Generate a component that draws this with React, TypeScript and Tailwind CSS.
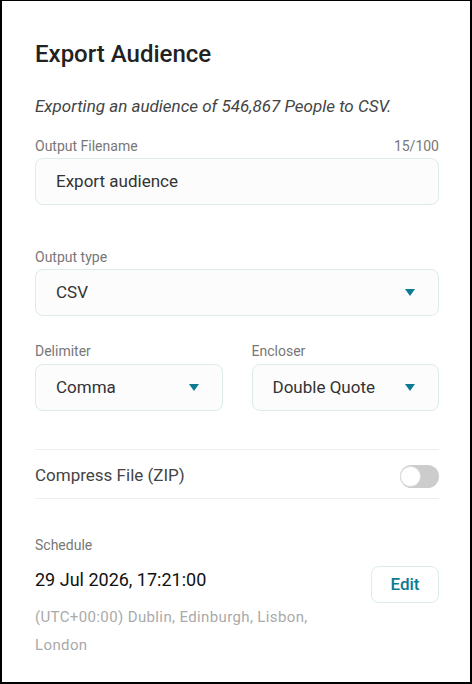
import { useState } from "react";

function Caret() {
  return (
    <svg width="10" height="8" viewBox="0 0 10 8" className="shrink-0">
      <path d="M0 0 H10 L5 7 Z" fill="#0b7b94" />
    </svg>
  );
}

function SelectBox({ value, className = "" }: { value: string; className?: string }) {
  return (
    <div
      className={`flex h-[47px] items-center justify-between rounded-lg border border-[#dcecec] bg-[#fcfcfc] pl-5 pr-[23px] ${className}`}
    >
      <span className="text-[17px] text-[#333]">{value}</span>
      <Caret />
    </div>
  );
}

export default function App() {
  const [zip, setZip] = useState(false);

  return (
    <div
      className="flex h-[684px] w-[472px] flex-col border-t border-r-2 border-b-2 border-l-2 border-black bg-white pt-[39px] pl-[33px] pr-[31px] text-[#333]"
      style={{ fontFamily: "Roboto, 'Noto Sans', sans-serif" }}
    >
      {/* Header */}
      <h1 className="text-[24px] font-medium leading-7 text-[#222]">Export Audience</h1>
      <p className="mt-[26px] text-[17px] italic leading-6 text-[#444]">
        Exporting an audience of 546,867 People to CSV.
      </p>

      {/* Filename */}
      <div className="mt-[19px] flex justify-between text-[14px] leading-[18px] text-[#777]">
        <span>Output Filename</span>
        <span>15/100</span>
      </div>
      <div className="mt-[3px] flex h-[47px] items-center rounded-lg border border-[#dcecec] bg-[#fcfcfc] px-5">
        <span className="text-[17px] text-[#333]">Export audience</span>
      </div>

      {/* Output type */}
      <div className="mt-[43px] text-[14px] leading-[18px] text-[#777]">Output type</div>
      <SelectBox value="CSV" className="mt-[3px]" />

      {/* Delimiter / Encloser */}
      <div className="mt-[26px] grid grid-cols-2 gap-[29px]">
        <div>
          <div className="text-[14px] leading-[18px] text-[#777]">Delimiter</div>
          <SelectBox value="Comma" className="mt-1" />
        </div>
        <div>
          <div className="text-[14px] leading-[18px] text-[#777]">Encloser</div>
          <SelectBox value="Double Quote" className="mt-1" />
        </div>
      </div>

      {/* Compress toggle */}
      <div className="mt-[38px] flex h-[50px] items-center justify-between border-y border-[#eeeeee] pt-[4px]">
        <span className="text-[17px] text-[#444]">Compress File (ZIP)</span>
        <button
          onClick={() => setZip(!zip)}
          className={`relative h-[23px] w-[39px] rounded-full ${zip ? "bg-[#0b7b94]" : "bg-[#cccccc]"}`}
        >
          <span
            className={`absolute top-[1px] h-[21px] w-[21px] rounded-full border border-[#dddddd] bg-white ${zip ? "left-[17px]" : "left-0"}`}
          />
        </button>
      </div>

      {/* Schedule */}
      <div className="mt-[37px] text-[14px] leading-[18px] text-[#777]">Schedule</div>
      <div className="flex items-start justify-between">
        <div className="mt-[14px]">
          <div className="text-[18px] leading-6 text-[#111]">29 Jul 2026, 17:21:00</div>
          <div className="mt-[11px] w-[300px] text-[15px] leading-[28px] tracking-wide text-[#aaaaaa]">
            (UTC+00:00) Dublin, Edinburgh, Lisbon, London
          </div>
        </div>
        <button className="mt-[12px] h-[37px] w-[68px] rounded-lg border border-[#dcecec] bg-white text-[17px] font-medium text-[#0b7b94]">
          Edit
        </button>
      </div>
    </div>
  );
}
